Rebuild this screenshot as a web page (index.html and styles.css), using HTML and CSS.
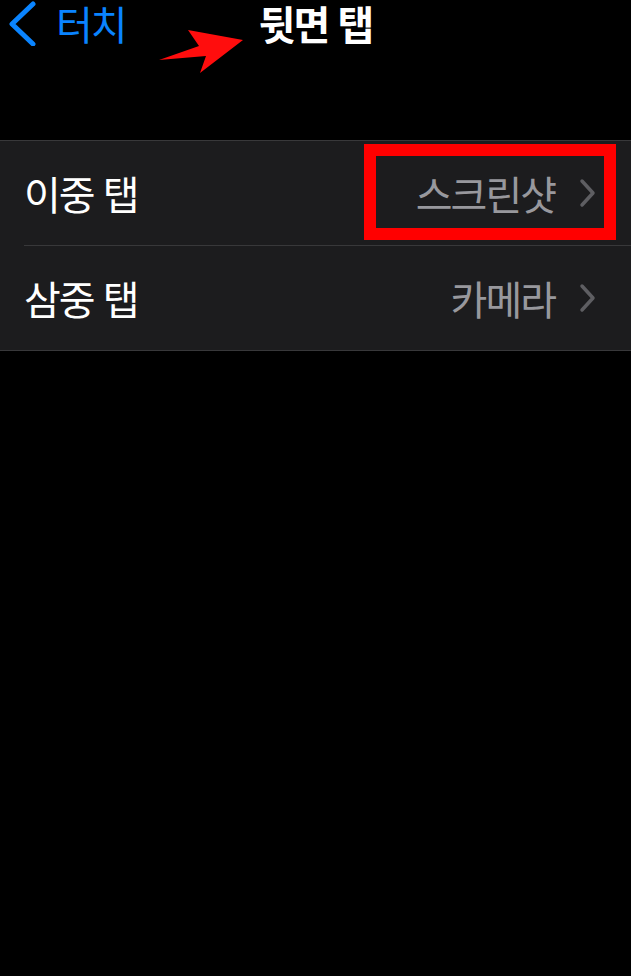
FILE: index.html
```html
<!DOCTYPE html>
<html lang="ko">
<head>
<meta charset="utf-8">
<link rel="stylesheet" href="styles.css">
</head>
<body>
<header class="nav">
  <div class="nav-bar">
    <a class="back">
      <svg class="back-icon" width="30" height="46" viewBox="0 0 30 46"><path d="M26 4 L5 24 L26 44" fill="none" stroke="#0a84ff" stroke-width="5" stroke-linecap="round" stroke-linejoin="round"/></svg>
      <span class="back-label">터치</span>
    </a>
    <h1 class="title">뒷면 탭</h1>
    <div class="spacer"></div>
  </div>
  <svg class="annot-arrow" width="631" height="90" viewBox="0 0 631 90"><polygon points="159,60 199,46 188,30 243,40 200,73 206,56" fill="#ff0d0d"/></svg>
</header>
<section class="group">
  <div class="row">
    <span class="label">이중 탭</span>
    <span class="value">스크린샷</span>
    <svg class="chev" width="20" height="32" viewBox="0 0 20 32"><path d="M5 4 L16 16 L5 28" fill="none" stroke="#5e5e62" stroke-width="3.5" stroke-linecap="round" stroke-linejoin="round"/></svg>
    <div class="highlight"></div>
  </div>
  <div class="row">
    <span class="label">삼중 탭</span>
    <span class="value">카메라</span>
    <svg class="chev" width="20" height="32" viewBox="0 0 20 32"><path d="M5 4 L16 16 L5 28" fill="none" stroke="#5e5e62" stroke-width="3.5" stroke-linecap="round" stroke-linejoin="round"/></svg>
  </div>
</section>
</body>
</html>
```
FILE: styles.css
```css
html, body {
  margin: 0;
  padding: 0;
  background: #000;
  height: 100%;
}
body {
  font-family: "Noto Sans CJK KR", "Noto Sans", sans-serif;
  color: #fff;
}
.nav {
  position: relative;
  height: 140px;
}
.nav-bar {
  display: grid;
  grid-template-columns: 1fr auto 1fr;
  align-items: center;
  height: 46px;
}
.back {
  display: flex;
  align-items: center;
  color: #0a84ff;
  padding-left: 7px;
  gap: 19px;
}
.back-label {
  font-size: 40px;
  line-height: 46px;
  letter-spacing: -2px;
}
.title {
  margin: 0;
  font-size: 40px;
  line-height: 46px;
  font-weight: 700;
  letter-spacing: -2px;
}
.annot-arrow {
  position: absolute;
  left: 0;
  top: 0;
}
.group {
  background: #1c1c1e;
  border-top: 1px solid #38383a;
  border-bottom: 1px solid #38383a;
}
.row {
  position: relative;
  display: flex;
  align-items: center;
  height: 104px;
  padding: 0 34px 0 24px;
}
.row + .row {
  border-top: 1px solid transparent;
}
.row + .row::before {
  content: "";
  position: absolute;
  left: 24px;
  right: 0;
  top: -1px;
  height: 1px;
  background: #38383a;
}
.label {
  flex: 1;
  font-size: 40px;
  letter-spacing: -2px;
}
.value {
  font-size: 40px;
  letter-spacing: -2px;
  color: #98989d;
  margin-right: 22px;
}
.chev {
  display: block;
}
.highlight {
  position: absolute;
  left: 364px;
  top: 3px;
  width: 228px;
  height: 72px;
  border: 12px solid #ff0000;
}
```
